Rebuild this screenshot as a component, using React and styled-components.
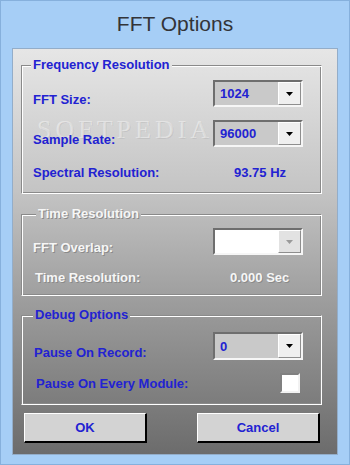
import React from "react";
import styled, { createGlobalStyle } from "styled-components";

const Global = createGlobalStyle`
  html, body { margin: 0; padding: 0; background: #a5cdf5; }
  body { width: 350px; height: 465px; overflow: hidden; }
  * { box-sizing: border-box; }
`;

const BLUE = "#2222d2";
const SHADOW = "#8a8a8a";

const Frame = styled.div`
  width: 350px;
  height: 465px;
  display: flex;
  flex-direction: column;
  background: #a6cef6;
  border: 1px solid #86b0dc;
  padding: 0 11px 9px 11px;
`;

const TitleBar = styled.div`
  height: 47px;
  display: flex;
  align-items: center;
  justify-content: center;
  padding-bottom: 2px;
  font-family: "Liberation Sans", Arial, sans-serif;
  font-size: 21px;
  color: #333438;
`;

const Client = styled.div`
  position: relative;
  flex: 1;
  display: flex;
  flex-direction: column;
  border: 1px solid #93adc9;
  background: linear-gradient(180deg, #e6e6e6 0%, #c4c4c4 35%, #9c9c9c 63%, #6c6c6c 100%);
  padding: 8px 15px 0 8px;
  font-family: "Liberation Sans", Arial, sans-serif;
  font-size: 13px;
  font-weight: bold;
`;

const Watermark = styled.div`
  position: absolute;
  left: 24px;
  top: 68px;
  font-family: "Liberation Serif", "Times New Roman", serif;
  font-size: 26px;
  line-height: 1;
  letter-spacing: 4px;
  font-weight: normal;
  color: rgba(255, 255, 255, 0.4);
  text-shadow: 1px 1px 0 rgba(0, 0, 0, 0.06);
  pointer-events: none;
`;

const Group = styled.div`
  position: relative;
  display: flex;
  flex-direction: column;
  margin-top: ${(p) => p.$gap || 0}px;
`;

const GroupHead = styled.div`
  height: 16px;
  display: flex;
`;

const HeadLeft = styled.div`
  width: ${(p) => p.$w}px;
  height: 8px;
  align-self: flex-end;
  border-top: 1px solid ${SHADOW};
  border-left: 1px solid ${SHADOW};
  box-shadow: inset 1px 1px 0 #ffffff;
`;

const HeadRight = styled.div`
  flex: 1;
  height: 8px;
  align-self: flex-end;
  border-top: 1px solid ${SHADOW};
  border-right: 1px solid #ffffff;
  box-shadow: inset 0 1px 0 #ffffff, inset -1px 0 0 ${SHADOW};
`;

const Legend = styled.div`
  padding: 0 2px;
  line-height: 16px;
  color: ${(p) => (p.$disabled ? "#f6f6f6" : BLUE)};
  text-shadow: ${(p) => (p.$disabled ? `1px 1px 0 ${SHADOW}` : "none")};
`;

const GroupBody = styled.div`
  display: flex;
  flex-direction: column;
  border-style: solid;
  border-width: 0 1px 1px 1px;
  border-color: ${SHADOW} #ffffff #ffffff ${SHADOW};
  box-shadow: inset 1px 0 0 #ffffff, inset -1px -1px 0 ${SHADOW};
  padding: ${(p) => p.$pt}px 18px ${(p) => p.$pb}px 11px;
`;

const Row = styled.div`
  display: grid;
  grid-template-columns: 1fr 90px;
  align-items: center;
  height: ${(p) => p.$h}px;
  margin-top: ${(p) => p.$mt || 0}px;
`;

const Label = styled.div`
  padding-top: ${(p) => p.$drop || 0}px;
  padding-left: ${(p) => p.$indent || 0}px;
  color: ${(p) => (p.$disabled ? "#f6f6f6" : BLUE)};
  text-shadow: ${(p) => (p.$disabled ? `1px 1px 0 ${SHADOW}` : "none")};
  white-space: nowrap;
`;

const Value = styled(Label)`
  padding-left: ${(p) => p.$shift ?? 21}px;
`;

const Combo = styled.div`
  height: ${(p) => p.$h}px;
  display: flex;
  border-style: solid;
  border-width: 2px;
  border-color: #6e6e6e #f6f6f6 #f6f6f6 #6e6e6e;
`;

const ComboText = styled.div`
  flex: 1;
  display: flex;
  align-items: center;
  padding-left: 5px;
  background: ${(p) => (p.$disabled ? "#ffffff" : "#c9c9c9")};
  color: ${BLUE};
`;

const ComboButton = styled.div`
  width: 23px;
  display: flex;
  align-items: center;
  justify-content: center;
  background: ${(p) => (p.$disabled ? "#e2e2e2" : "#efefef")};
  border-style: solid;
  border-width: 1px;
  border-color: #ffffff #8e8e8e #8e8e8e #ffffff;
`;

const CheckBox = styled.div`
  justify-self: end;
  margin-right: 3px;
  width: 20px;
  height: 20px;
  background: #ffffff;
  border-style: solid;
  border-width: 2px;
  border-color: #808080 #f2f2f2 #f2f2f2 #808080;
`;

const ButtonRow = styled.div`
  display: flex;
  justify-content: space-between;
  margin-top: 8px;
  padding: 0 2px 0 3px;
`;

const Button = styled.div`
  width: 123px;
  height: 30px;
  display: flex;
  align-items: center;
  justify-content: center;
  background: #d3d3d3;
  border-style: solid;
  border-width: 1px 2px 2px 1px;
  border-color: #ffffff #000000 #000000 #ffffff;
  color: ${BLUE};
  padding-bottom: 1px;
`;

const Arrow = ({ color = "#000" }) => (
  <svg width="7" height="4" viewBox="0 0 7 4">
    <polygon points="0,0 7,0 3.5,4" fill={color} />
  </svg>
);

const Select = ({ value, h = 27, disabled }) => (
  <Combo $h={h}>
    <ComboText $disabled={disabled}>{value}</ComboText>
    <ComboButton $disabled={disabled}>
      <Arrow color={disabled ? "#9a9a9a" : "#000"} />
    </ComboButton>
  </Combo>
);

export default function App() {
  return (
    <>
      <Global />
      <Frame>
        <TitleBar>FFT Options</TitleBar>
        <Client>
          <Watermark>SOFTPEDIA</Watermark>

          <Group>
            <GroupHead>
              <HeadLeft $w={10} />
              <Legend>Frequency Resolution</Legend>
              <HeadRight />
            </GroupHead>
            <GroupBody $pt={7} $pb={9}>
              <Row $h={27}>
                <Label $drop={11}>FFT Size:</Label>
                <Select value="1024" />
              </Row>
              <Row $h={27} $mt={13}>
                <Label $drop={11}>Sample Rate:</Label>
                <Select value="96000" />
              </Row>
              <Row $h={24} $mt={13}>
                <Label>Spectral Resolution:</Label>
                <Value>93.75 Hz</Value>
              </Row>
            </GroupBody>
          </Group>

          <Group $gap={12}>
            <GroupHead>
              <HeadLeft $w={15} />
              <Legend $disabled>Time Resolution</Legend>
              <HeadRight />
            </GroupHead>
            <GroupBody $pt={6} $pb={5}>
              <Row $h={27}>
                <Label $drop={11} $disabled>FFT Overlap:</Label>
                <Select value="" disabled />
              </Row>
              <Row $h={26} $mt={9}>
                <Label $disabled $indent={2}>Time Resolution:</Label>
                <Value $disabled $shift={17}>0.000 Sec</Value>
              </Row>
            </GroupBody>
          </Group>

          <Group $gap={11}>
            <GroupHead>
              <HeadLeft $w={12} />
              <Legend>Debug Options</Legend>
              <HeadRight />
            </GroupHead>
            <GroupBody $pt={9} $pb={9}>
              <Row $h={28}>
                <Label $drop={12} $indent={1}>Pause On Record:</Label>
                <Select value="0" h={28} />
              </Row>
              <Row $h={24} $mt={11}>
                <Label $indent={3}>Pause On Every Module:</Label>
                <CheckBox />
              </Row>
            </GroupBody>
          </Group>

          <ButtonRow>
            <Button>OK</Button>
            <Button>Cancel</Button>
          </ButtonRow>
        </Client>
      </Frame>
    </>
  );
}
